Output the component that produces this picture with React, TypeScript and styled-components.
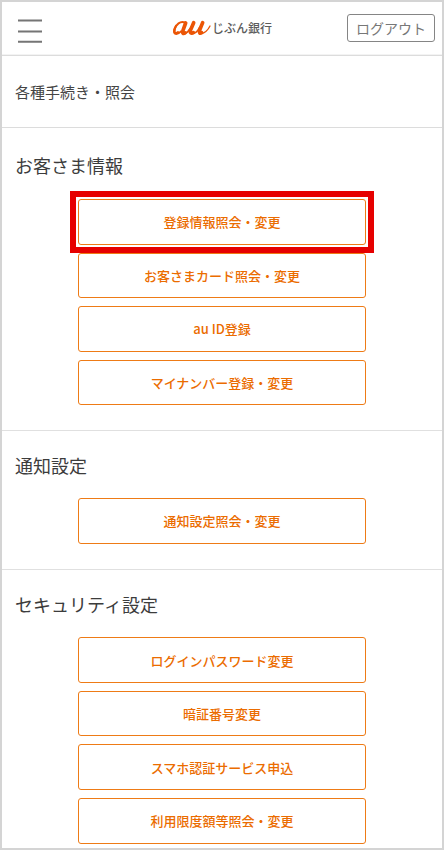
import React from "react";
import styled, { createGlobalStyle, css } from "styled-components";

const GlobalStyle = createGlobalStyle`
  *, *::before, *::after { box-sizing: border-box; }
  body {
    margin: 0;
    background: #fff;
    color: #444;
    font-family: "Noto Sans CJK JP", "Noto Sans", sans-serif;
  }
`;

const Screen = styled.div`
  width: 444px;
  height: 850px;
  border: 2px solid #d4d4d4;
  background: #fff;
  overflow: hidden;
`;

const Header = styled.header`
  display: grid;
  grid-template-columns: 1fr auto 1fr;
  align-items: start;
  height: 54px;
  padding: 0 7px 0 16px;
  border-bottom: 1px solid #dcdcdc;
  box-shadow: inset 0 -1px 0 #f3f3f3;
`;

const MenuButton = styled.button`
  width: 24px;
  height: 26px;
  margin-top: 16px;
  padding: 0;
  border: 0;
  background: none;
  svg { display: block; }
`;

const Brand = styled.div`
  display: flex;
  margin: 17px 5px 0 -4px;
  svg { display: block; }
`;

const BrandName = styled.span`
  font-size: 12px;
  font-weight: 500;
  line-height: 17px;
  color: #5c5c5c;
`;

const LogoutButton = styled.button`
  justify-self: end;
  width: 88px;
  height: 28px;
  margin-top: 12px;
  padding: 0;
  border: 1px solid #858585;
  border-radius: 3px;
  background: #fff;
  color: #777;
  font: 400 14px/26px "Noto Sans CJK JP", sans-serif;
`;

const PageTitle = styled.h1`
  height: 72px;
  margin: 0;
  padding: 0 13px;
  border-bottom: 1px solid #dcdcdc;
  font-size: 15px;
  font-weight: 400;
  line-height: 71px;
`;

const Section = styled.section<{ $height: number; $top: number }>`
  height: ${(p) => p.$height}px;
  padding: ${(p) => p.$top}px 13px 0;
  border-bottom: 1px solid #e0e0e0;
`;

const SectionTitle = styled.h2`
  height: 28px;
  margin: 0;
  font-size: 18px;
  font-weight: 400;
  line-height: 28px;
  color: #3c3c3c;
`;

const ActionList = styled.div<{ $top: number }>`
  display: flex;
  flex-direction: column;
  gap: 8.1px;
  width: 288px;
  margin: ${(p) => p.$top}px 0 0 63px;
`;

const ActionButton = styled.button<{ $highlighted?: boolean }>`
  position: relative;
  height: 45.5px;
  padding: 0;
  border: 1px solid #ee7b16;
  border-radius: 3px;
  background: #fff;
  color: #eb6c00;
  font: 500 13px/43px "Noto Sans CJK JP", sans-serif;
  ${(p) =>
    p.$highlighted &&
    css`
      z-index: 1;
      &::after {
        content: "";
        position: absolute;
        inset: -9px;
        border: 6px solid #e60000;
        pointer-events: none;
      }
    `}
`;

const MenuIcon = () => (
  <svg width="24" height="26" viewBox="0 0 24 26" stroke="#757575" strokeWidth="2">
    <path d="M0 2.6H24M0 13.6H24M0 23.7H24" />
  </svg>
);

const AuMark = () => (
  <svg
    width="40"
    height="18"
    viewBox="63 57 120 54"
    fill="none"
    stroke="#eb5505"
    strokeLinecap="round"
    strokeLinejoin="round"
  >
    <path strokeWidth="6" d="M102 68C88 62 75 73 70 89C66 104 78 106 90 94" />
    <path strokeWidth="7" d="M75 78C66 93 70 104 81 97" />
    <path strokeWidth="11" d="M104 69L96 91C93 100 97 102 102 99" />
    <path strokeWidth="5" d="M101 101C109 99 113 93 117 86" />
    <path strokeWidth="11" d="M128 68L119 89C115 99 121 101 127 98" />
    <path strokeWidth="5" d="M122 101C134 101 141 92 146 82" />
    <path strokeWidth="11" d="M155 68L146 90C143 99 147 101 152 98" />
    <path strokeWidth="4" d="M150 101C162 99 171 90 177 78" />
  </svg>
);

const sections = [
  {
    title: "お客さま情報",
    height: 303,
    titleTop: 23,
    listTop: 20,
    actions: ["登録情報照会・変更", "お客さまカード照会・変更", "au ID登録", "マイナンバー登録・変更"],
  },
  { title: "通知設定", height: 139, titleTop: 20, listTop: 19, actions: ["通知設定照会・変更"] },
  {
    title: "セキュリティ設定",
    height: 290,
    titleTop: 20,
    listTop: 19.3,
    actions: ["ログインパスワード変更", "暗証番号変更", "スマホ認証サービス申込", "利用限度額等照会・変更"],
  },
];

export default function App() {
  return (
    <>
      <GlobalStyle />
      <Screen>
        <Header>
          <MenuButton aria-label="メニュー">
            <MenuIcon />
          </MenuButton>
          <Brand>
            <AuMark />
            <BrandName>じぶん銀行</BrandName>
          </Brand>
          <LogoutButton>ログアウト</LogoutButton>
        </Header>
        <PageTitle>各種手続き・照会</PageTitle>
        {sections.map((section, s) => (
          <Section key={section.title} $height={section.height} $top={section.titleTop}>
            <SectionTitle>{section.title}</SectionTitle>
            <ActionList $top={section.listTop}>
              {section.actions.map((label, i) => (
                <ActionButton key={label} $highlighted={s === 0 && i === 0}>
                  {label}
                </ActionButton>
              ))}
            </ActionList>
          </Section>
        ))}
      </Screen>
    </>
  );
}
